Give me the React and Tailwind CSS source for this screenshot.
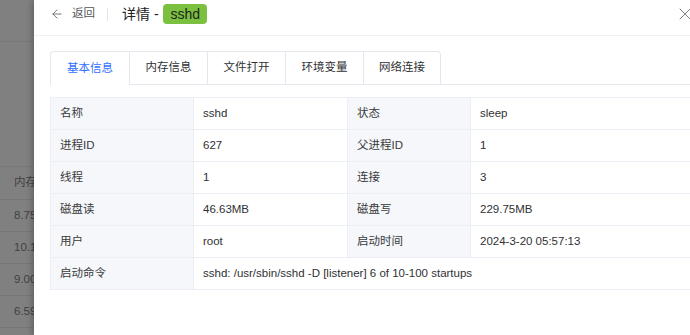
import React from 'react';
import { ArrowLeft, X } from 'lucide-react';

const tabs = ['基本信息', '内存信息', '文件打开', '环境变量', '网络连接'];

const rows = [
    ['名称', 'sshd', '状态', 'sleep'],
    ['进程ID', '627', '父进程ID', '1'],
    ['线程', '1', '连接', '3'],
    ['磁盘读', '46.63MB', '磁盘写', '229.75MB'],
    ['用户', 'root', '启动时间', '2024-3-20 05:57:13'],
];

const bgRows = ['8.75', '10.1', '9.00', '6.59'];

const Label = ({ children }) => (
    <div className="h-[32px] border-r border-b border-[#ebeef5] bg-[#f5f7fa] px-[9px] flex items-center text-[#3a3a3a]">
        {children}
    </div>
);

const Value = ({ children, span }) => (
    <div className={`h-[32px] border-r border-b border-[#ebeef5] bg-white px-[9px] flex items-center text-[#303133] whitespace-nowrap ${span ? 'col-span-3' : ''}`}>
        {children}
    </div>
);

export default function App() {
    return (
        <div
            className="w-[690px] h-[335px] overflow-hidden flex bg-[#808080] text-[11.5px]"
            style={{ fontFamily: '"Liberation Sans", "Noto Sans CJK SC", sans-serif' }}
        >
            {/* page behind the mask */}
            <div className="w-[34px] shrink-0 overflow-hidden text-[#404040] whitespace-nowrap">
                <div className="h-[42px] border-b border-[#777777]" />
                <div className="h-[125px] border-b border-[#777777]" />
                <div className="h-[33px] border-b border-[#777777] pl-[14px] flex items-center">内存</div>
                {bgRows.map((v) => (
                    <div key={v} className="h-[32px] border-b border-[#777777] pl-[14px] flex items-center">
                        {v}
                    </div>
                ))}
            </div>

            {/* drawer */}
            <div className="w-[661px] shrink-0 bg-white shadow-[-2px_0_6px_rgba(0,0,0,0.25)]">
                <div className="h-[36px] border-b border-[#f0f0f0]">
                    <div className="h-[28px] flex items-center pl-[16px]">
                        <ArrowLeft size={14} strokeWidth={1.5} className="text-[#666]" />
                        <span className="ml-[8px] text-[#555]">返回</span>
                        <span className="ml-[12px] w-px h-[13px] bg-[#e4e4e4]" />
                        <span className="ml-[14px] text-[14px] text-[#222] whitespace-pre">详情 - </span>
                        <span className="ml-[1px] h-[20px] px-[7px] rounded-[4px] bg-[#7cc040] text-[14px] leading-[20px] text-[#1f1f1f]">
                            sshd
                        </span>
                        <X size={20} strokeWidth={1.1} className="ml-auto text-[#777]" />
                    </div>
                </div>

                <div className="pl-[16px] pt-[15px]">
                    <div className="flex border-b border-[#e4e7ed] w-[680px]">
                        {tabs.map((t, i) => (
                            <div
                                key={t}
                                className={`h-[33px] flex items-center justify-center border-t border-l border-[#e4e7ed] bg-white ${
                                    i === 0 ? 'w-[79px] rounded-tl-[4px] text-[#3370ff] h-[34px] -mb-px' : 'w-[78px] text-[#303133]'
                                } ${i === tabs.length - 1 ? 'border-r rounded-tr-[4px]' : ''}`}
                            >
                                {t}
                            </div>
                        ))}
                    </div>

                    <div className="mt-[12px] w-[680px] grid grid-cols-[143px_154px_123px_1fr] border-t border-l border-[#ebeef5]">
                        {rows.map((r) => (
                            <React.Fragment key={r[0]}>
                                <Label>{r[0]}</Label>
                                <Value>{r[1]}</Value>
                                <Label>{r[2]}</Label>
                                <Value>{r[3]}</Value>
                            </React.Fragment>
                        ))}
                        <Label>启动命令</Label>
                        <Value span>sshd: /usr/sbin/sshd -D [listener] 6 of 10-100 startups</Value>
                    </div>
                </div>
            </div>
        </div>
    );
}
